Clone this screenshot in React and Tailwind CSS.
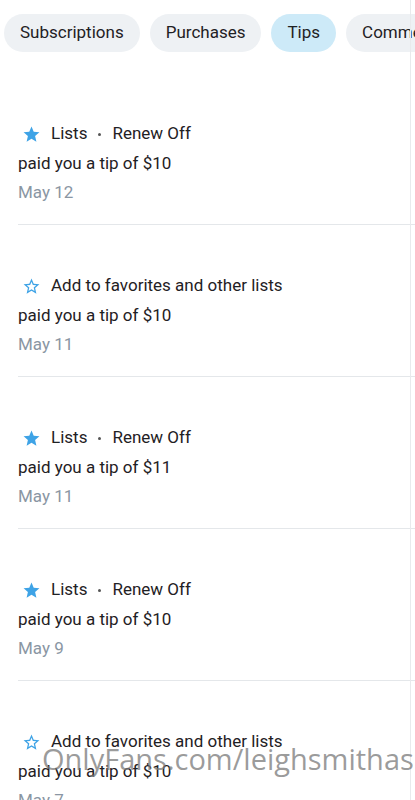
import React from 'react'

const tabs = [
  { label: 'Subscriptions', active: false },
  { label: 'Purchases', active: false },
  { label: 'Tips', active: true },
  { label: 'Comments', active: false },
]

const tips = [
  { listed: true, amount: '$10', date: 'May 12' },
  { listed: false, amount: '$10', date: 'May 11' },
  { listed: true, amount: '$11', date: 'May 11' },
  { listed: true, amount: '$10', date: 'May 9' },
  { listed: false, amount: '$10', date: 'May 7' },
]

function StarIcon({ filled }) {
  if (filled) {
    return (
      <svg width="19" height="19" viewBox="0 0 24 24" className="shrink-0">
        <path
          fill="#3ea3e6"
          d="M12 17.27L18.18 21l-1.64-7.03L22 9.24l-7.19-.61L12 2 9.19 8.63 2 9.24l5.46 4.73L5.82 21z"
        />
      </svg>
    )
  }
  return (
    <svg width="19" height="19" viewBox="0 0 24 24" className="shrink-0">
      <path
        fill="#3ea3e6"
        d="M22 9.24l-7.19-.62L12 2 9.19 8.63 2 9.24l5.46 4.73L5.82 21 12 17.27 18.18 21l-1.63-7.03L22 9.24zM12 15.4l-3.76 2.27 1-4.28-3.32-2.88 4.38-.38L12 6.1l1.71 4.04 4.38.38-3.32 2.88 1 4.28L12 15.4z"
      />
    </svg>
  )
}

function TipRow({ tip }) {
  return (
    <div className="pt-[49px] pb-[19px] border-b border-[#e4e7ea]">
      <div className="h-[24px] flex items-center text-[17px] text-[#1f2124]">
        <span className="ml-[4px] mr-[10px] flex items-center">
          <StarIcon filled={tip.listed} />
        </span>
        {tip.listed ? (
          <>
            <span>Lists</span>
            <span className="ml-[11px] mr-[11px] w-[3px] h-[3px] rounded-full bg-[#555]" />
            <span>Renew Off</span>
          </>
        ) : (
          <span>Add to favorites and other lists</span>
        )}
      </div>
      <div className="h-[24px] mt-[6px] flex items-center text-[17px] text-[#1f2124]">
        paid you a tip of {tip.amount}
      </div>
      <div className="h-[24px] mt-[5px] flex items-center text-[17px] text-[#8a96a3]">
        {tip.date}
      </div>
    </div>
  )
}

export default function App() {
  return (
    <div
      className="relative w-[415px] h-[800px] overflow-hidden bg-white"
      style={{ fontFamily: 'Roboto, "Liberation Sans", sans-serif' }}
    >
      {/* Tabs */}
      <div className="flex gap-[10px] pl-[4px] pt-[14px] whitespace-nowrap">
        {tabs.map((t) => (
          <div
            key={t.label}
            className={`h-[38px] px-[16px] rounded-full flex items-center text-[17px] text-[#1f2124] shrink-0 ${
              t.active ? 'bg-[#cdeaf8]' : 'bg-[#eef1f4]'
            }`}
          >
            {t.label}
          </div>
        ))}
      </div>

      {/* Tips list */}
      <div className="mt-[21px] pl-[18px]">
        {tips.map((tip, i) => (
          <TipRow key={i} tip={tip} />
        ))}
      </div>

      {/* right edge line */}
      <div className="absolute top-0 bottom-0 left-[410px] w-px bg-[#e8eaec]" />

      {/* watermark */}
      <div
        className="absolute left-[42px] top-[744px] text-[29px] leading-none text-[#7a7a7a]/75 whitespace-nowrap"
        style={{ fontFamily: '"Open Sans", "Noto Sans", sans-serif' }}
      >
        OnlyFans.com/leighsmithas
      </div>
    </div>
  )
}
